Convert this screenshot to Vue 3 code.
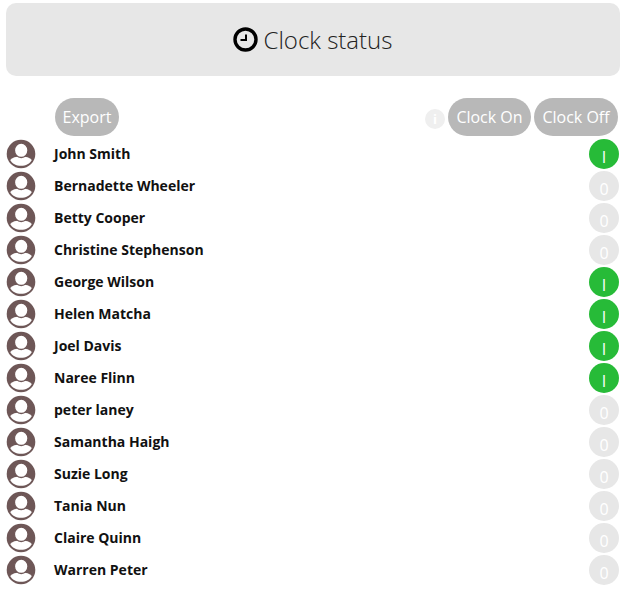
<template>
  <div class="page">
    <div class="header">
      <svg class="clock" width="25" height="25" viewBox="0 0 25 25">
        <circle cx="12.500" cy="12.500" r="10.500" fill="none" stroke="#000" stroke-width="3.400" />
        <path d="M13 7.500V13H7.500" fill="none" stroke="#000" stroke-width="2" />
      </svg>
      <span class="title">Clock status</span>
    </div>

    <div class="toolbar">
      <button class="pill export">Export</button>
      <div class="actions">
        <span class="info">i</span>
        <button class="pill on-btn">Clock On</button>
        <button class="pill off-btn">Clock Off</button>
      </div>
    </div>

    <div class="list">
      <div class="row" v-for="person in people" :key="person.name">
        <svg class="avatar" width="30" height="30" viewBox="0 0 30 30">
          <circle cx="15" cy="15" r="14.300" fill="#6e5757" />
          <path d="M4.200 21C6 18.500 10 17.500 15 17.500s9 1 10.800 3.500C24 24.800 19.800 26.800 15 26.800S6 24.800 4.200 21z" fill="#fff" />
          <ellipse cx="15.200" cy="11.300" rx="6.800" ry="7.200" fill="#fff" stroke="#6e5757" stroke-width="1.400" />
        </svg>
        <span class="name">{{ person.name }}</span>
        <span class="status" :class="{ on: person.on }">{{ person.on ? 'I' : '0' }}</span>
      </div>
    </div>
  </div>
</template>

<script setup>
const people = [
  { name: 'John Smith', on: true },
  { name: 'Bernadette Wheeler', on: false },
  { name: 'Betty Cooper', on: false },
  { name: 'Christine Stephenson', on: false },
  { name: 'George Wilson', on: true },
  { name: 'Helen Matcha', on: true },
  { name: 'Joel Davis', on: true },
  { name: 'Naree Flinn', on: true },
  { name: 'peter laney', on: false },
  { name: 'Samantha Haigh', on: false },
  { name: 'Suzie Long', on: false },
  { name: 'Tania Nun', on: false },
  { name: 'Claire Quinn', on: false },
  { name: 'Warren Peter', on: false }
]
</script>

<style scoped>
.page {
  width: 624px;
  height: 598px;
  overflow: hidden;
  box-sizing: border-box;
  padding: 3px 4px 0 6px;
  font-family: "Open Sans", sans-serif;
  background: #fff;
}

.header {
  height: 73px;
  background: #e7e7e7;
  border-radius: 10px;
  display: flex;
  align-items: center;
  justify-content: center;
  gap: 6px;
  padding-right: 1px;
}

.title {
  font-size: 24px;
  font-weight: 300;
  color: #222;
}

.toolbar {
  margin-top: 22px;
  height: 38px;
  display: flex;
  align-items: center;
  justify-content: space-between;
  padding: 0 2px 0 49px;
}

.actions {
  display: flex;
  align-items: center;
  gap: 3px;
}

.pill {
  height: 38px;
  border: none;
  border-radius: 19px;
  padding: 0;
  background: #b8b8b8;
  color: #fff;
  font-family: "Open Sans", sans-serif;
  font-size: 16px;
}

.export {
  width: 64px;
}

.on-btn {
  width: 83px;
}

.off-btn {
  width: 84px;
}

.info {
  width: 20px;
  height: 20px;
  margin-top: 4px;
  border-radius: 50%;
  background: #efefef;
  color: #fff;
  font-size: 13px;
  font-weight: 700;
  line-height: 20px;
  text-align: center;
}

.list {
  margin-top: 2px;
}

.row {
  height: 32px;
  display: flex;
  align-items: center;
}

.avatar {
  flex: none;
}

.name {
  margin-left: 18px;
  padding-bottom: 2px;
  font-size: 14px;
  font-weight: 700;
  color: #111;
}

.status {
  margin-left: auto;
  width: 30px;
  height: 30px;
  margin-right: 1px;
  border-radius: 50%;
  background: #e7e7e7;
  color: #fff;
  font-size: 16px;
  line-height: 36px;
  text-align: center;
}

.status.on {
  background: #27bb38;
}
</style>
